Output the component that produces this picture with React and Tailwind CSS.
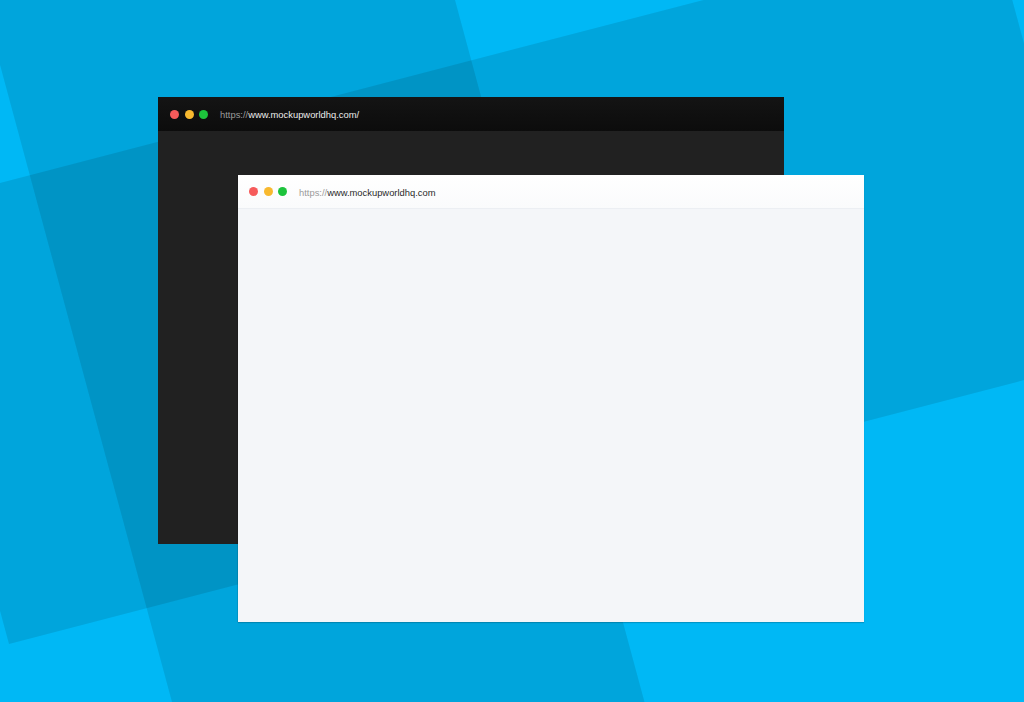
import React from 'react';

const Dots = () => (
  <div className="flex items-center gap-[5.5px]">
    <span className="block w-[9px] h-[9px] rounded-full bg-[#f65b5b]" />
    <span className="block w-[9px] h-[9px] rounded-full bg-[#f8b92f]" />
    <span className="block w-[9px] h-[9px] rounded-full bg-[#1dc33c]" />
  </div>
);

const BrowserWindow = ({ dark, url, className }) => (
  <div className={`absolute w-[626px] h-[447px] flex flex-col ${className}`}>
    <div
      className={
        dark
          ? 'h-[34px] flex items-center pl-[12px] gap-[12px] bg-gradient-to-b from-[#141414] to-[#0c0c0c]'
          : 'h-[34px] flex items-center pl-[11px] gap-[12px] bg-gradient-to-b from-[#ffffff] to-[#fafbfc] border-b border-[#eceff3]'
      }
    >
      <Dots />
      <p className="pt-[2px] text-[9.4px] leading-none font-['Liberation_Sans',Arial,sans-serif]">
        <span className="text-[#9b9b9b]">https://</span>
        <span className={dark ? 'text-[#ececec]' : 'text-[#2a2a2a]'}>{url}</span>
      </p>
    </div>
    <div className={dark ? 'flex-1 bg-[#212121]' : 'flex-1 bg-[#f4f6f9]'} />
  </div>
);

export default function App() {
  return (
    <div className="relative w-[1024px] h-[702px] overflow-hidden bg-[#00b8f5]">
      {/* background shapes */}
      <svg className="absolute inset-0" width="1024" height="702" viewBox="0 0 1024 702">
        <polygon points="-17.5,0 455,0 644.5,702 172,702" fill="#000" fillOpacity="0.1" />
        <polygon points="-108,211 992,-75 1109,358 9,644" fill="#000" fillOpacity="0.1" />
      </svg>

      <BrowserWindow dark url="www.mockupworldhq.com/" className="left-[158px] top-[97px]" />
      <BrowserWindow
        url="www.mockupworldhq.com"
        className="left-[238px] top-[175px] shadow-[0_1px_1px_rgba(0,0,0,0.18),-1px_0_0_rgba(0,0,0,0.08)]"
      />
    </div>
  );
}
